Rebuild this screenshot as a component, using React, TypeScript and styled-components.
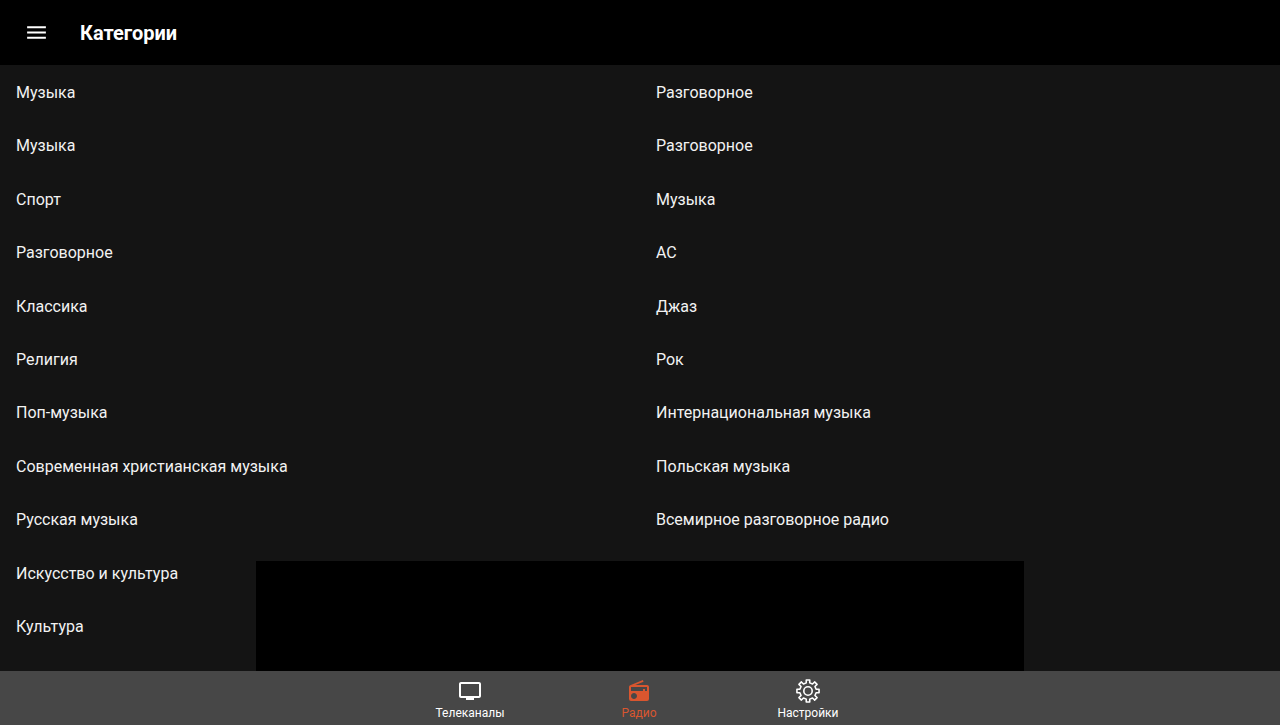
import React from "react";
import styled, { createGlobalStyle } from "styled-components";
import { MdMenu, MdRadio, MdTv } from "react-icons/md";

const GlobalStyle = createGlobalStyle`
  *, *::before, *::after { box-sizing: border-box; }
  body {
    margin: 0;
    background: #141414;
    color: #f2f2f2;
    font-family: Roboto, "Noto Sans", sans-serif;
  }
`;

const Screen = styled.div`
  display: flex;
  flex-direction: column;
  min-height: 100vh;
`;

const Header = styled.header`
  display: flex;
  align-items: center;
  gap: 24px;
  height: 65px;
  padding: 0 16px;
  background: #000;
`;

const MenuButton = styled.button`
  display: grid;
  place-items: center;
  width: 40px;
  height: 40px;
  padding: 0;
  border: 0;
  background: none;
  color: #fff;
  cursor: pointer;
`;

const Title = styled.h1`
  margin: 0;
  color: #fff;
  font-size: 20px;
  font-weight: 700;
  line-height: 24px;
`;

const Main = styled.main`
  position: relative;
  flex: 1;
  display: grid;
  grid-template-columns: 1fr 1fr;
  padding: 1px 0 17px;
`;

const CategoryList = styled.ul`
  display: grid;
  grid-template-rows: repeat(11, minmax(40px, 1fr));
  margin: 0;
  padding: 0;
  list-style: none;
`;

const CategoryItem = styled.li`
  display: grid;
`;

const CategoryLink = styled.a`
  display: flex;
  align-items: center;
  padding: 0 16px;
  color: inherit;
  font-size: 16px;
  line-height: 20px;
  text-decoration: none;
`;

const Banner = styled.aside`
  position: absolute;
  bottom: 0;
  left: 20%;
  width: 60%;
  height: 110px;
  background: #000;
`;

const BottomNav = styled.nav`
  display: flex;
  justify-content: center;
  height: 54px;
  padding-right: 2px;
  background: #474747;
`;

const Tab = styled.button<{ $active?: boolean }>`
  display: flex;
  flex-direction: column;
  align-items: center;
  justify-content: flex-end;
  gap: 2px;
  width: 169px;
  padding: 0 0 4px;
  border: 0;
  background: none;
  color: ${({ $active }) => ($active ? "#d9562f" : "#fff")};
  font-family: inherit;
  font-size: 12px;
  line-height: 16px;
  cursor: pointer;
`;

const leftColumn = [
  "Музыка",
  "Музыка",
  "Спорт",
  "Разговорное",
  "Классика",
  "Религия",
  "Поп-музыка",
  "Современная христианская музыка",
  "Русская музыка",
  "Искусство и культура",
  "Культура",
];

const rightColumn = [
  "Разговорное",
  "Разговорное",
  "Музыка",
  "АС",
  "Джаз",
  "Рок",
  "Интернациональная музыка",
  "Польская музыка",
  "Всемирное разговорное радио",
];

// Outline of an eight-toothed gear: each tooth is root, tip, tip, root.
const gearPoints = Array.from({ length: 8 }, (_, tooth) =>
  [
    [-12, 8.3],
    [-9, 11.2],
    [9, 11.2],
    [12, 8.3],
  ].map(([offset, radius]) => {
    const angle = ((tooth * 45 + offset) * Math.PI) / 180;
    return `${(12 + radius * Math.sin(angle)).toFixed(2)},${(12 - radius * Math.cos(angle)).toFixed(2)}`;
  })
)
  .flat()
  .join(" ");

function GearIcon() {
  return (
    <svg
      width="24"
      height="24"
      viewBox="0 0 24 24"
      fill="none"
      stroke="currentColor"
      strokeWidth="1.6"
      strokeLinejoin="round"
      aria-hidden="true"
    >
      <polygon points={gearPoints} />
      <circle cx="12" cy="12" r="4.2" />
    </svg>
  );
}

const tabs = [
  { label: "Телеканалы", icon: <MdTv size={24} /> },
  { label: "Радио", icon: <MdRadio size={24} />, active: true },
  { label: "Настройки", icon: <GearIcon /> },
];

function Categories({ names }: { names: string[] }) {
  return (
    <CategoryList>
      {names.map((name, index) => (
        <CategoryItem key={index}>
          <CategoryLink href="#">{name}</CategoryLink>
        </CategoryItem>
      ))}
    </CategoryList>
  );
}

export default function App() {
  return (
    <>
      <GlobalStyle />
      <Screen>
        <Header>
          <MenuButton type="button" aria-label="Меню">
            <MdMenu size={25} />
          </MenuButton>
          <Title>Категории</Title>
        </Header>
        <Main>
          <Categories names={leftColumn} />
          <Categories names={rightColumn} />
          <Banner />
        </Main>
        <BottomNav>
          {tabs.map(({ label, icon, active }) => (
            <Tab key={label} type="button" $active={active} aria-current={active ? "page" : undefined}>
              {icon}
              {label}
            </Tab>
          ))}
        </BottomNav>
      </Screen>
    </>
  );
}
